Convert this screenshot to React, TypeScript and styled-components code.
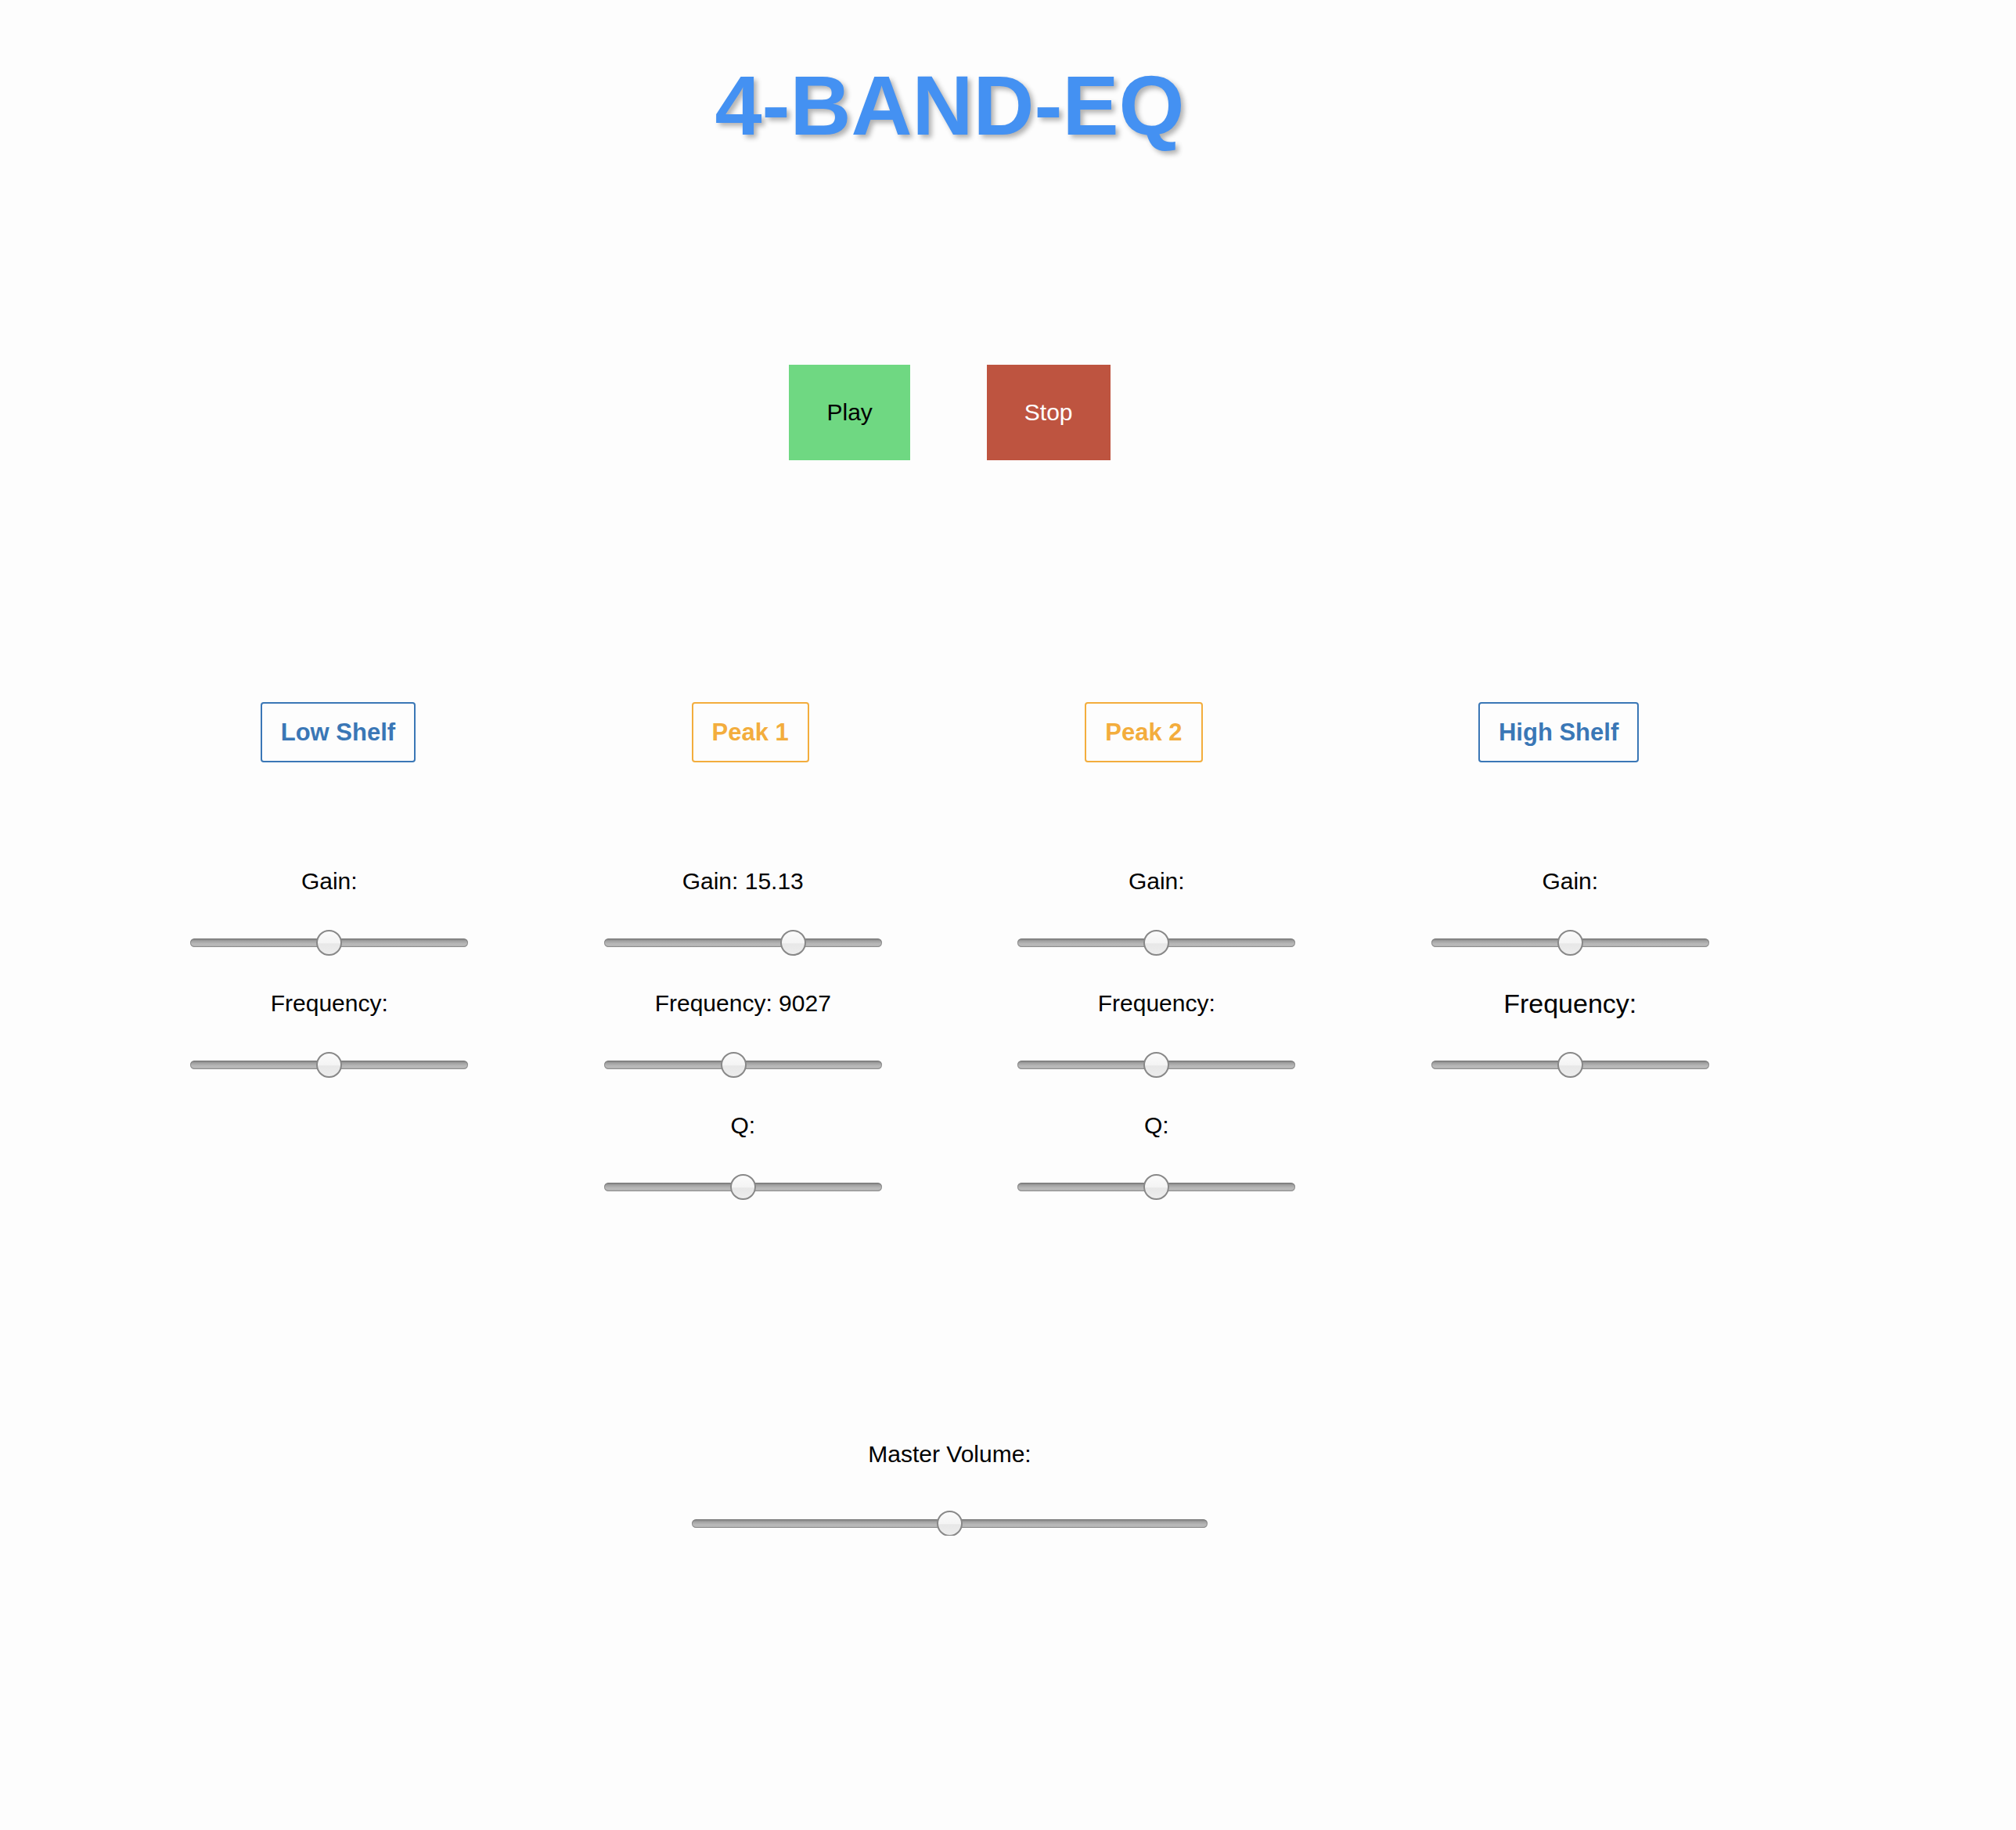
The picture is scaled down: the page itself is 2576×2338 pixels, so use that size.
import React from "react";
import styled, { createGlobalStyle } from "styled-components";

const GlobalStyle = createGlobalStyle`
  html, body {
    margin: 0;
    padding: 0;
    background: #fdfdfd;
  }
  body {
    font-family: "Liberation Sans", Arial, Helvetica, sans-serif;
    color: #000;
  }
`;

const Page = styled.div`
  width: 2427px;
  text-align: center;
`;

const Title = styled.h1`
  margin: 81px 0 0;
  font-size: 108px;
  line-height: 108px;
  font-weight: 700;
  color: #4491f2;
  text-shadow: 4px 4px 6px rgba(0, 0, 0, 0.3);
`;

const ButtonRow = styled.div`
  margin-top: 277px;
  display: flex;
  justify-content: center;
  gap: 98px;
`;

const TransportButton = styled.button<{ $bg: string; $fg: string }>`
  height: 122px;
  padding: 0 48px;
  border: none;
  border-radius: 0;
  background: ${(p) => p.$bg};
  color: ${(p) => p.$fg};
  font-family: "Liberation Sans", Arial, sans-serif;
  font-size: 30px;
  cursor: pointer;
`;

const BandHeaderRow = styled.div`
  width: 2114px;
  margin: 309px auto 0;
  display: flex;
  justify-content: space-around;
`;

const BandTag = styled.button<{ $color: string }>`
  box-sizing: border-box;
  height: 77px;
  padding: 0 24px;
  border: 2px solid ${(p) => p.$color};
  border-radius: 4px;
  background: transparent;
  color: ${(p) => p.$color};
  font-family: "Liberation Sans", Arial, sans-serif;
  font-weight: 700;
  font-size: 31px;
  display: flex;
  align-items: center;
  cursor: pointer;
`;

const BandGrid = styled.div`
  width: 2114px;
  margin: 134px auto 0;
  display: grid;
  grid-template-columns: repeat(4, 1fr);
  align-items: start;
`;

const BandColumn = styled.div`
  display: flex;
  flex-direction: column;
  align-items: center;
  gap: 44px;
`;

const ControlLabel = styled.label<{ $large?: boolean }>`
  display: block;
  font-size: ${(p) => (p.$large ? "34px" : "30px")};
  line-height: 36px;
  white-space: nowrap;
`;

const Slider = styled.input.attrs({ type: "range" })<{ $width: number }>`
  -webkit-appearance: none;
  appearance: none;
  display: block;
  margin: 0;
  padding: 0;
  width: ${(p) => p.$width}px;
  height: 32px;
  background: transparent;

  &::-webkit-slider-runnable-track {
    height: 11px;
    border-radius: 6px;
    background: linear-gradient(
      to bottom,
      #787878 0%,
      #a2a2a2 30%,
      #bababa 65%,
      #b0b0b0 100%
    );
    box-shadow: inset 0 0 0 1px rgba(110, 110, 110, 0.55);
  }

  &::-webkit-slider-thumb {
    -webkit-appearance: none;
    appearance: none;
    box-sizing: border-box;
    width: 33px;
    height: 33px;
    margin-top: -11px;
    border-radius: 50%;
    border: 2px solid #888888;
    background: linear-gradient(
      to bottom,
      #fbfbfb 0%,
      #f4f4f4 50%,
      #e7e7e7 55%,
      #ededed 100%
    );
  }
`;

const MasterSection = styled.div`
  margin-top: 308px;
  display: flex;
  flex-direction: column;
  align-items: center;
  gap: 54px;
`;

type Control = { label: string; value: number; large?: boolean };
type Band = { name: string; color: string; controls: Control[] };

const BLUE = "#3a77b6";
const ORANGE = "#f3ad3d";

const bands: Band[] = [
  {
    name: "Low Shelf",
    color: BLUE,
    controls: [
      { label: "Gain:", value: 50 },
      { label: "Frequency:", value: 50 },
    ],
  },
  {
    name: "Peak 1",
    color: ORANGE,
    controls: [
      { label: "Gain: 15.13", value: 70 },
      { label: "Frequency: 9027", value: 46.4 },
      { label: "Q:", value: 50 },
    ],
  },
  {
    name: "Peak 2",
    color: ORANGE,
    controls: [
      { label: "Gain:", value: 50 },
      { label: "Frequency:", value: 50 },
      { label: "Q:", value: 50 },
    ],
  },
  {
    name: "High Shelf",
    color: BLUE,
    controls: [
      { label: "Gain:", value: 50 },
      { label: "Frequency:", value: 50, large: true },
    ],
  },
];

function ControlSlider({ value, width }: { value: number; width: number }) {
  const [v, setV] = React.useState(value);
  return (
    <Slider
      $width={width}
      min={0}
      max={100}
      step={0.1}
      value={v}
      onChange={(e: React.ChangeEvent<HTMLInputElement>) => setV(Number(e.target.value))}
    />
  );
}

export default function App() {
  return (
    <Page>
      <GlobalStyle />
      <Title>4-BAND-EQ</Title>
      <ButtonRow>
        <TransportButton $bg="#6fd882" $fg="#000">Play</TransportButton>
        <TransportButton $bg="#be5440" $fg="#fff">Stop</TransportButton>
      </ButtonRow>
      <BandHeaderRow>
        {bands.map((b) => (
          <BandTag key={b.name} $color={b.color}>
            {b.name}
          </BandTag>
        ))}
      </BandHeaderRow>
      <BandGrid>
        {bands.map((b) => (
          <BandColumn key={b.name}>
            {b.controls.map((c) => (
              <React.Fragment key={c.label}>
                <ControlLabel $large={c.large}>{c.label}</ControlLabel>
                <ControlSlider value={c.value} width={355} />
              </React.Fragment>
            ))}
          </BandColumn>
        ))}
      </BandGrid>
      <MasterSection>
        <ControlLabel>Master Volume:</ControlLabel>
        <ControlSlider value={50} width={659} />
      </MasterSection>
    </Page>
  );
}
